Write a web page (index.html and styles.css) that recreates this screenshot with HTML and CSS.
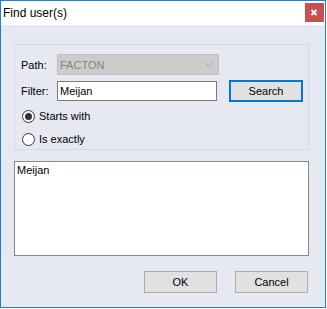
FILE: index.html
```html
<!DOCTYPE html>
<html>
<head>
<meta charset="utf-8">
<link rel="stylesheet" href="styles.css">
</head>
<body>
<div class="window">
  <div class="titlebar">
    <span class="title">Find user(s)</span>
    <div class="close">
      <svg width="19" height="19" viewBox="0 0 19 19"><path d="M6.5 7 L11.5 12 M11.5 7 L6.5 12" stroke="#fff" stroke-width="1.8" fill="none"/></svg>
    </div>
  </div>
  <div class="client">
    <div class="group">
      <div class="row">
        <span class="label">Path:</span>
        <div class="combo">
          <span>FACTON</span>
          <svg class="chev" width="9" height="5" viewBox="0 0 9 5"><path d="M0.5 0.5 L4.5 4.5 L8.5 0.5" stroke="#a0a0a0" stroke-width="1" fill="none"/></svg>
        </div>
      </div>
      <div class="row row-filter">
        <span class="label">Filter:</span>
        <div class="textbox">Meijan</div>
        <div class="btn btn-search">Search</div>
      </div>
      <div class="radio-row first">
        <span class="radio checked"></span>
        <span class="rlabel">Starts with</span>
      </div>
      <div class="radio-row">
        <span class="radio"></span>
        <span class="rlabel">Is exactly</span>
      </div>
    </div>
    <div class="listbox">
      <div class="item">Meijan</div>
    </div>
    <div class="buttons">
      <div class="btn">OK</div>
      <div class="btn">Cancel</div>
    </div>
  </div>
</div>
</body>
</html>
```
FILE: styles.css
```css
html, body {
  margin: 0;
  padding: 0;
  background: #ffffff;
}
body {
  width: 327px;
  height: 309px;
  overflow: hidden;
  font-family: "Liberation Sans", Arial, sans-serif;
  font-size: 11px;
  color: #000;
}
.window {
  width: 326px;
  height: 308px;
  box-sizing: border-box;
  border: 1px solid #1883d7;
  display: flex;
  flex-direction: column;
  background: #e6e9f2;
}
.titlebar {
  height: 24px;
  background: #ffffff;
  display: flex;
  align-items: flex-start;
  justify-content: space-between;
}
.title {
  font-family: "Liberation Sans", sans-serif;
  font-size: 12px;
  margin-left: 2px;
  margin-top: 5px;
  color: #000;
}
.close {
  width: 19px;
  height: 19px;
  background: #c75050;
  margin-top: 2px;
  margin-right: 1px;
}
.close svg { display: block; }
.client {
  flex: 1;
  padding-left: 13px;
  display: flex;
  flex-direction: column;
}
.group {
  margin-top: 19px;
  width: 295px;
  height: 106px;
  box-sizing: border-box;
  border: 1px solid #d5d9e0;
  padding: 9px 0 0 6px;
}
.row {
  display: flex;
  align-items: center;
  height: 21px;
}
.label {
  width: 36px;
}
.combo {
  width: 162px;
  height: 21px;
  box-sizing: border-box;
  background: #cccccc;
  border: 1px solid #bfbfbf;
  color: #838383;
  display: flex;
  align-items: center;
  justify-content: space-between;
  padding: 0 5px 0 2px;
}
.chev { display: block; }
.row-filter {
  margin-top: 5px;
  height: 22px;
}
.textbox {
  width: 160px;
  height: 20px;
  box-sizing: border-box;
  background: #fff;
  border: 1px solid #7a7a7a;
  padding-left: 2px;
  line-height: 18px;
}
.btn {
  width: 73px;
  height: 22px;
  box-sizing: border-box;
  background: #e1e1e1;
  border: 1px solid #adadad;
  display: flex;
  align-items: center;
  justify-content: center;
}
.btn-search {
  margin-left: 12px;
  width: 74px;
  border: 2px solid #0078d7;
}
.radio-row {
  display: flex;
  align-items: center;
  height: 20px;
  margin-top: 3px;
  padding-left: 1px;
}
.radio-row.first {
  margin-top: 4px;
}
.radio {
  width: 13px;
  height: 13px;
  box-sizing: border-box;
  border: 1px solid #333333;
  border-radius: 50%;
  background: #fff;
  display: flex;
  align-items: center;
  justify-content: center;
}
.radio.checked::after {
  content: "";
  width: 7px;
  height: 7px;
  border-radius: 50%;
  background: #333333;
}
.rlabel {
  margin-left: 4px;
}
.listbox {
  margin-top: 11px;
  width: 295px;
  height: 95px;
  box-sizing: border-box;
  border: 1px solid #828790;
  background: #fff;
  padding: 2px 0 0 2px;
}
.item {
  line-height: 13px;
}
.buttons {
  display: flex;
  gap: 18px;
  margin-top: 15px;
  margin-left: 130px;
}
```
